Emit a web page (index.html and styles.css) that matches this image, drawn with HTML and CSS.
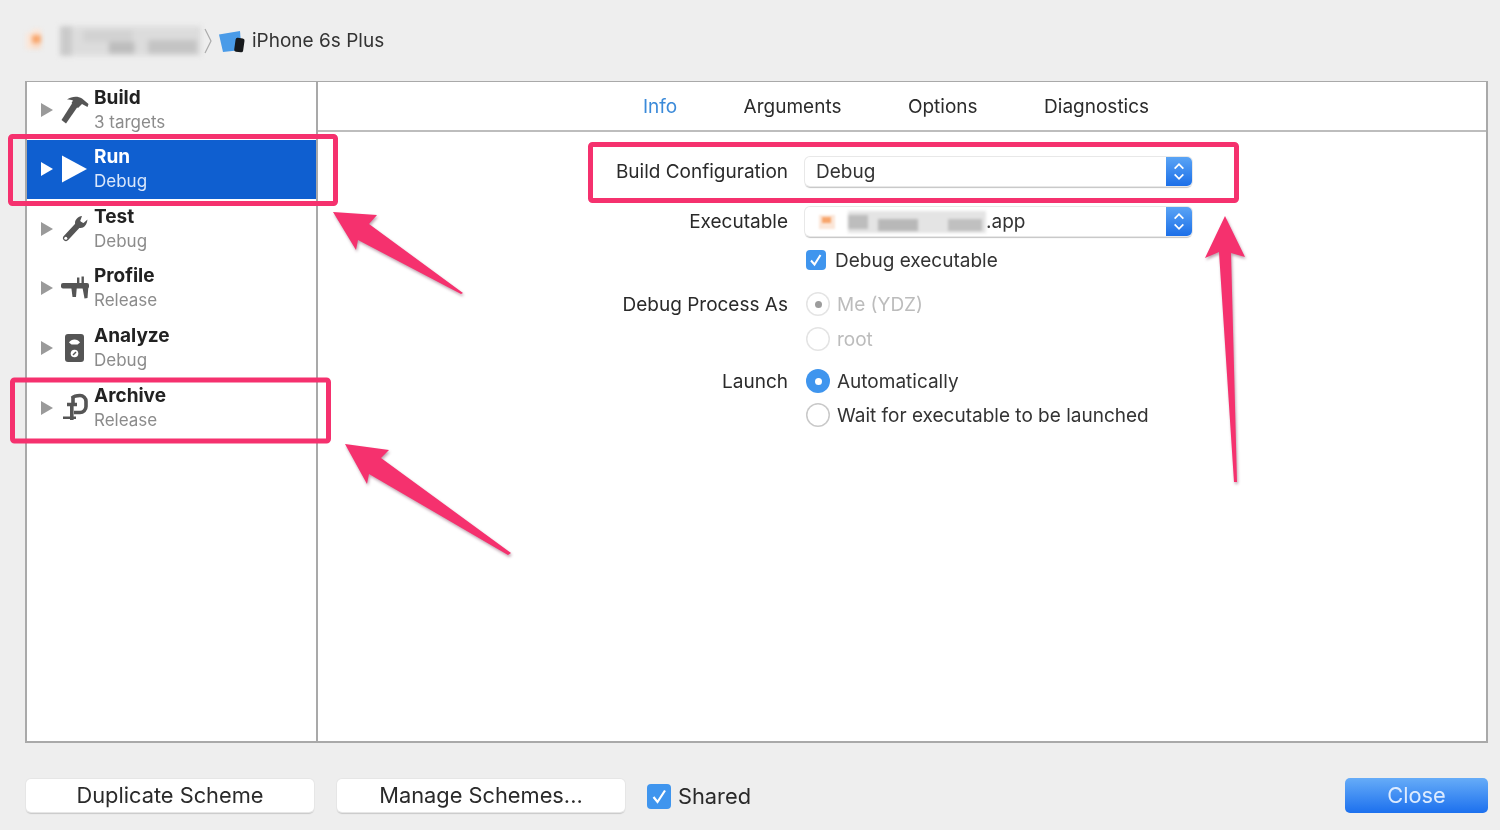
FILE: index.html
```html
<!DOCTYPE html>
<html lang="en">
<head>
<meta charset="utf-8">
<title>Scheme editor</title>
<link rel="stylesheet" href="styles.css">
</head>
<body>
<div class="window">
  <header class="toolbar">
    <svg class="crumb-app" viewBox="0 0 30 30"><rect x="1" y="7" width="6" height="16" fill="#fbe6d8"/><rect x="7" y="3" width="9" height="6" fill="#fbe6d8"/><rect x="7" y="9" width="9" height="8" fill="#f8a56b"/><rect x="7" y="17" width="9" height="6" fill="#f9dcc8"/></svg>
    <svg class="crumb-name" viewBox="0 0 144 30"><rect width="144" height="30" fill="#dcdcdc"/><rect x="24" y="4" width="50" height="12" fill="#d2d2d2"/><rect x="50" y="16" width="26" height="12" fill="#bdbdbd"/><rect x="90" y="14" width="50" height="14" fill="#c4c4c4"/><rect x="0" y="0" width="12" height="30" fill="#cacaca"/></svg>
    <svg class="crumb-sep" viewBox="0 0 10 26"><path d="M2 1l6 12-6 12" fill="none" stroke="#aaa" stroke-width="1.2"/></svg>
    <svg class="crumb-device" viewBox="0 0 26 24"><path d="M0 4.500L21 1l1.500 19L4 22z" fill="#4a9be8"/><rect x="16" y="8" width="9" height="14" rx="2" transform="rotate(8 20 14)" fill="#17191c"/></svg>
    <span class="crumb-text">iPhone 6s Plus</span>
  </header>

  <main class="panel">
    <nav class="sidebar">
      <div class="action first">
        <span class="tri"></span>
        <svg class="icon" viewBox="0 0 30 30"><path d="M1.500 25L13 7l5.500 3.500L6 28.500z" fill="#555"/><path d="M7 4.500C12 1 18 1 22 3.500l6.500 5.500-1 3-5.500-3-4 4-6.500-5 1.500-2.500C11 4.500 9 4.500 7 4.500z" fill="#555"/></svg>
        <div class="labels"><b>Build</b><span>3 targets</span></div>
      </div>
      <div class="action selected">
        <span class="tri"></span>
        <svg class="icon" viewBox="0 0 30 30"><path d="M2 1.500l25 13.500L2 28.500z" fill="#fff"/></svg>
        <div class="labels"><b>Run</b><span>Debug</span></div>
      </div>
      <div class="action">
        <span class="tri"></span>
        <svg class="icon" viewBox="0 0 30 30"><path d="M6 24L19 10" stroke="#555" stroke-width="6" stroke-linecap="round"/><path d="M22 2c-4 .5-7 3.500-7 7 0 4 5 6 8 4.500 2.500-1.500 4-4 4.500-8l-4 3.500-3.500-1.500z" fill="#555"/><circle cx="5.800" cy="24.200" r="1.500" fill="#fff"/></svg>
        <div class="labels"><b>Test</b><span>Debug</span></div>
      </div>
      <div class="action">
        <span class="tri"></span>
        <svg class="icon" viewBox="0 0 30 30"><rect x="1" y="10" width="28" height="5.500" rx="2" fill="#555"/><path d="M11 12h6l-1 12h-3.500zM22 12h6.500l-1 13-3 .5z" fill="#555"/><rect x="17" y="4.500" width="2.400" height="7" fill="#555"/><rect x="21.500" y="3.500" width="2.400" height="8" fill="#555"/></svg>
        <div class="labels"><b>Profile</b><span>Release</span></div>
      </div>
      <div class="action">
        <span class="tri"></span>
        <svg class="icon" viewBox="0 0 30 30"><rect x="5" y="1" width="19" height="28" rx="3" fill="#555"/><path d="M9 9.500a6.500 6.500 0 0 1 11 0l-2.500 2h-6z" fill="#fff"/><circle cx="14.500" cy="20.500" r="3.800" fill="#fff"/><path d="M13 22l3-3" stroke="#555" stroke-width="1.400"/></svg>
        <div class="labels"><b>Analyze</b><span>Debug</span></div>
      </div>
      <div class="action">
        <span class="tri"></span>
        <svg class="icon" viewBox="0 0 30 30"><path d="M12 5c2-2 4-2.500 8-2.500a6 6 0 0 1 6 6v5a6 6 0 0 1-6 6h-6" fill="none" stroke="#555" stroke-width="3.600"/><path d="M7 11.500h10M13 4v8" stroke="#555" stroke-width="3.600"/><rect x="10" y="12" width="3.600" height="15" fill="#555"/><rect x="3" y="23.500" width="13" height="2.500" fill="#555"/></svg>
        <div class="labels"><b>Archive</b><span>Release</span></div>
      </div>
    </nav>

    <section class="detail">
      <div class="tabs">
        <span class="tab active">Info</span>
        <span class="tab">Arguments</span>
        <span class="tab">Options</span>
        <span class="tab">Diagnostics</span>
      </div>
      <div class="form">
        <div class="row select-row">
          <label>Build Configuration</label>
          <div class="select"><span class="value">Debug</span><span class="stepper"><svg viewBox="0 0 26 30"><path d="M8.500 12L13 7.500l4.500 4.500M8.500 18l4.500 4.500 4.500-4.500" fill="none" stroke="#fff" stroke-width="1.800"/></svg></span></div>
        </div>
        <div class="row select-row second">
          <label>Executable</label>
          <div class="select"><span class="value"><svg class="exe-icon" viewBox="0 0 16 14"><rect width="16" height="14" fill="#fbe6d8"/><rect x="3" y="2" width="9" height="6" fill="#f8a56b"/></svg><svg class="exe-name" viewBox="0 0 138 22"><rect width="138" height="22" fill="#e4e4e4"/><rect y="4" width="20" height="14" fill="#bdbdbd"/><rect x="30" y="8" width="40" height="12" fill="#b8b8b8"/><rect x="100" y="8" width="34" height="12" fill="#c0c0c0"/></svg>.app</span><span class="stepper"><svg viewBox="0 0 26 30"><path d="M8.500 12L13 7.500l4.500 4.500M8.500 18l4.500 4.500 4.500-4.500" fill="none" stroke="#fff" stroke-width="1.800"/></svg></span></div>
        </div>
        <div class="row check-row">
          <label></label>
          <div class="choice tight"><span class="check small"><svg viewBox="0 0 20 20"><path d="M5 10.500l3.500 4L14.500 5" fill="none" stroke="#fff" stroke-width="2"/></svg></span>Debug executable</div>
        </div>
        <div class="row process-row">
          <label>Debug Process As</label>
          <div class="choice disabled"><span class="radio on-disabled"></span>Me (YDZ)</div>
        </div>
        <div class="row root-row">
          <label></label>
          <div class="choice disabled"><span class="radio"></span>root</div>
        </div>
        <div class="row launch-row">
          <label>Launch</label>
          <div class="choice"><span class="radio on"></span>Automatically</div>
        </div>
        <div class="row wait-row">
          <label></label>
          <div class="choice"><span class="radio"></span>Wait for executable to be launched</div>
        </div>
      </div>
    </section>
  </main>

  <footer class="footer">
    <button class="btn wide">Duplicate Scheme</button>
    <button class="btn wide">Manage Schemes...</button>
    <div class="shared"><span class="check"><svg viewBox="0 0 24 25"><path d="M6.500 13l4 5L18 6.500" fill="none" stroke="#fff" stroke-width="2.200"/></svg></span>Shared</div>
    <button class="btn primary">Close</button>
  </footer>
</div>

<svg class="annotations" viewBox="0 0 1500 830">
  <rect class="box" x="10.500" y="136.500" width="325" height="67" rx="2"/>
  <rect class="box" x="12.500" y="380" width="316" height="61" rx="2"/>
  <rect class="box" x="590.500" y="144.500" width="646" height="56" rx="2"/>
  <polygon class="arrow" points="333,212 377,215 369,224 463,293 461,294 358,240 356,250"/>
  <polygon class="arrow" points="345,444 389,450 381,458 511,553 508,555 369,474 367,484"/>
  <polygon class="arrow" points="1225,216 1245,257 1231,253 1237,482 1234,482 1219,252 1205,258"/>
</svg>
</body>
</html>
```

FILE: styles.css
```css
* { box-sizing: border-box; }
html, body { margin: 0; height: 100%; overflow: hidden; }
body {
  background: #eeeeee;
  color: #222;
  font-family: Inter, "Liberation Sans", Arial, sans-serif;
  font-size: 19px;
}
.window { width: 1500px; height: 830px; display: flex; flex-direction: column; padding: 0 12px 0 25px; filter: blur(.35px); }

.toolbar { height: 81px; flex: none; display: flex; align-items: center; }
.crumb-app { width: 30px; height: 30px; flex: none; margin-right: 5px; filter: blur(2px); }
.crumb-name { width: 141px; height: 30px; flex: none; filter: blur(2.500px); }
.crumb-sep { width: 10px; height: 26px; flex: none; margin-left: 2px; }
.crumb-device { width: 26px; height: 24px; flex: none; margin-left: 6px; margin-top: 2px; }
.crumb-text { margin-left: 7px; color: #333; }

.panel { height: 662px; flex: none; display: flex; background: #fff; border: 2px solid #a9a9a9; border-width: 1.500px 2px 2px; }
.sidebar { width: 291px; flex: none; border-right: 2px solid #a9a9a9; }
.action { height: 59.800px; display: flex; align-items: center; padding: 0 0 1px 14px; }
.action.first { height: 57.500px; padding-bottom: 2px; }
.tri { width: 0; height: 0; border-left: 12px solid #9a9a9a; border-top: 7.500px solid transparent; border-bottom: 7.500px solid transparent; flex: none; margin-right: 7px; }
.icon { width: 30px; height: 30px; flex: none; margin-right: 4px; }
.labels { display: flex; flex-direction: column; gap: 2px; }
.labels b { font-size: 19px; line-height: 22px; color: #222; font-weight: 700; }
.labels span { font-size: 17px; line-height: 22px; color: #8b8b8b; }
.selected { background: #0f5fd0; }
.selected .tri { border-left-color: #fff; }
.selected .labels b { color: #fff; }
.selected .labels span { color: #dbe8fb; }

.detail { flex: 1; display: flex; flex-direction: column; min-width: 0; }
.tabs { height: 50px; flex: none; display: flex; align-items: center; justify-content: center; gap: 66.500px; padding-right: 12px; border-bottom: 2px solid #bdbdbd; }
.tab { color: #2b2b2b; }
.tab.active { color: #3b8ad9; }

.form { padding-top: 25px; display: flex; flex-direction: column; }
.row { display: grid; grid-template-columns: 470px 387px; column-gap: 17px; align-items: center; height: 24px; }
.row label { text-align: right; color: #2a2a2a; }
.select-row { height: 29px; }
.second { margin-top: 21px; }
.check-row { margin-top: 12px; }
.process-row { margin-top: 20px; }
.root-row { margin-top: 11px; }
.launch-row { margin-top: 18px; }
.wait-row { margin-top: 10px; }

.select { height: 29px; display: flex; align-items: center; justify-content: space-between; background: #fff; border-radius: 5px; box-shadow: 0 0 0 1px #e8e8e8, 0 1.500px 1px #c4c4c4; padding-left: 11px; color: #333; }
.value { display: flex; align-items: center; }
.stepper { width: 26px; height: 29px; background: linear-gradient(#5aa4f5, #1c6fe8); border-radius: 0 5px 5px 0; display: block; flex: none; }
.stepper svg { display: block; width: 26px; height: 29px; }
.exe-icon { width: 16px; height: 14px; margin: 0 13px 0 3px; filter: blur(1px); }
.exe-name { width: 138px; height: 22px; filter: blur(1.500px); }

.choice { display: flex; align-items: center; gap: 7px; color: #333; padding-left: 1px; }
.choice.tight { gap: 9px; padding-left: 1px; }
.choice.disabled { color: #bcbcbc; }
.radio { width: 24px; height: 24px; flex: none; border-radius: 50%; background: #fff; box-shadow: inset 0 0 0 1.500px #c9c9c9; display: flex; align-items: center; justify-content: center; }
.disabled .radio { box-shadow: inset 0 0 0 1.500px #e4e4e4; }
.radio.on-disabled::after { content: ""; width: 7px; height: 7px; border-radius: 50%; background: #9c9c9c; }
.radio.on { background: #3f95ee; box-shadow: none; }
.radio.on::after { content: ""; width: 7px; height: 7px; border-radius: 50%; background: #fff; }
.check { width: 24px; height: 25px; flex: none; border-radius: 4px; background: #3f95ee; display: block; }
.check.small { width: 20px; height: 20px; }
.check svg { display: block; width: 100%; height: 100%; }

.footer { flex: 1; display: flex; align-items: flex-start; padding: 36px 0 0 1px; }
.btn { font-family: inherit; height: 33px; border: 0; border-radius: 5px; background: #fff; color: #2a2a2a; font-size: 21.800px; line-height: 33px; padding: 0; box-shadow: 0 0 0 1px #e6e6e6, 0 1.500px 1px #c8c8c8; }
.wide { width: 288px; margin-right: 23px; }
.shared { display: flex; align-items: center; gap: 7px; font-size: 21.800px; height: 36px; color: #2a2a2a; margin-top: -1px; margin-left: -1px; }
.primary { width: 143px; height: 35px; margin-left: auto; margin-top: -1px; background: linear-gradient(#66acf8, #1c70ee); color: #dcebff; font-size: 21.800px; box-shadow: none; }

.annotations { position: absolute; left: 0; top: 0; width: 1500px; height: 830px; pointer-events: none; filter: blur(.3px); }
.box { fill: none; stroke: #f5316e; stroke-width: 5; }
.arrow { fill: #f5316e; filter: drop-shadow(1px 2px 1.500px rgba(90, 20, 50, .4)); }
```
